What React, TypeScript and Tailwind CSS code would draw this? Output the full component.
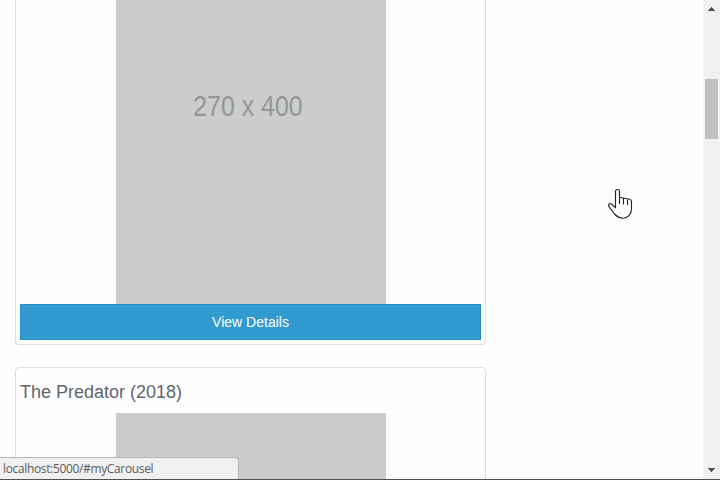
import React from "react";

function Poster({ label }: { label?: boolean }) {
  return (
    <div className="flex h-[400px] w-[270px] shrink-0 items-center justify-center bg-[#cbcdcc]">
      {label && (
        <span className="mr-[6px] mt-[4px] inline-block scale-x-[0.83] whitespace-nowrap text-[30px] leading-none text-[#969696]">
          270 x 400
        </span>
      )}
    </div>
  );
}

function MovieCard({ title }: { title: string }) {
  return (
    <article className="flex h-[450px] w-[471px] shrink-0 flex-col rounded-[4px] border border-[#dddddd] bg-[#fefefe] px-1 pb-1">
      <h4 className="flex h-[45px] shrink-0 items-center pt-[3px] text-[18px] leading-5 text-[#5f676c]">{title}</h4>
      <div className="flex justify-center">
        <Poster />
      </div>
    </article>
  );
}

function HandCursor() {
  return (
    <svg className="absolute left-[607px] top-[188px]" width="26" height="32" viewBox="0 0 26 32">
      <path
        d="M8.5 19.7V3.5C8.5 .8 12.5 .8 12.5 3.5V9.3L22.5 11.2C24 11.5 24.5 12 24.5 13.5V21C24.5 26.5 20.5 30.2 16 30.2C11.8 30.2 10 28.5 7.5 26L2 18.7C.6 16.3 2.6 14.8 4.5 16L8.5 19.7M12.5 9.3V15.5M16.5 10.2V16M20.5 11V16.5"
        fill="#fff"
        stroke="#242131"
        strokeWidth="1.15"
        strokeLinejoin="round"
        strokeLinecap="round"
      />
    </svg>
  );
}

function ScrollBar() {
  return (
    <aside className="flex h-[479px] w-[17px] shrink-0 flex-col items-center bg-[#f0f0f0]">
      <svg className="h-[17px] w-[17px] shrink-0" viewBox="0 0 17 17" shapeRendering="crispEdges">
        <path d="M8 7h1v1h1v1h1v1h1v1H5v-1h1V9h1V8h1z" fill="#505050" />
      </svg>
      <div className="mt-[62px] h-[60px] w-[13px] shrink-0 bg-[#c1c1c1]" />
      <svg className="mt-auto h-[17px] w-[17px] shrink-0" viewBox="0 0 17 17" shapeRendering="crispEdges">
        <path d="M5 6h7v1h-1v1h-1v1H9v1H8V9H7V8H6V7H5z" fill="#505050" />
      </svg>
    </aside>
  );
}

export default function App() {
  return (
    <div className="relative flex h-[480px] w-[720px] overflow-hidden border-b border-[#505050] bg-[#fefefe] font-['Liberation_Sans',Arial,sans-serif]">
      <main className="flex h-[479px] min-w-0 flex-1 flex-col gap-[22px] overflow-hidden pl-[15px]">
        <article className="flex h-[345px] w-[471px] shrink-0 flex-col justify-end rounded-b-[4px] border border-t-0 border-[#dddddd] px-1 pb-1">
          <div className="flex h-[304px] items-end justify-center overflow-hidden">
            <Poster label />
          </div>
          <button className="h-9 w-full shrink-0 border border-[#2a8bc0] bg-[#319bd0] text-[14px] leading-5 text-white">
            View Details
          </button>
        </article>
        <MovieCard title="The Predator (2018)" />
      </main>
      <ScrollBar />
      <HandCursor />
      <div className="absolute -left-px bottom-0 flex h-[22px] w-[240px] items-center rounded-tr-[4px] border border-b-0 border-[#b4b4b4] bg-[#f0f0f0] pl-[3px] font-['Open_Sans','Noto_Sans',sans-serif] text-[12px] leading-none text-[#5c5c5c]">
        <span className="pt-px tracking-[-0.35px]">localhost:5000/#myCarousel</span>
      </div>
    </div>
  );
}
